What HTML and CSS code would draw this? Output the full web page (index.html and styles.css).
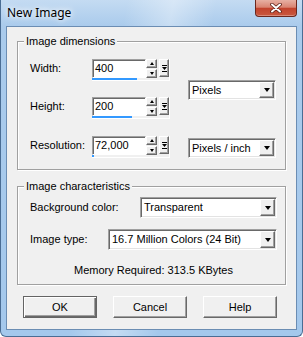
FILE: index.html
```html
<!DOCTYPE html>
<html lang="en">
<head>
    <meta charset="UTF-8">
    <title>New Image</title>
    <link rel="stylesheet" href="styles.css">
</head>
<body>
    <div class="window">
        <div class="titlebar">
            <span class="title">New Image</span>
            <div class="close">
                <svg width="12" height="10" viewBox="0 0 12 10">
                    <path d="M2 1.5 L10 8.5 M10 1.5 L2 8.5" stroke="#5a1f16" stroke-width="3.6" stroke-linecap="round"/>
                    <path d="M2 1.5 L10 8.5 M10 1.5 L2 8.5" stroke="#fff" stroke-width="2" stroke-linecap="round"/>
                </svg>
            </div>
        </div>

        <div class="client">
            <fieldset class="group dims">
                <legend>Image dimensions</legend>
                <div class="dim-grid">
                    <span class="lbl">Width:</span>
                    <div class="spin">
                        <div class="spin-row">
                            <div class="edit">400</div>
                            <div class="arrows"><span class="arr"><i class="up"></i></span><span class="arr"><i class="down"></i></span></div>
                            <div class="mini">
                                <svg width="5" height="7" viewBox="0 0 5 7"><rect x="0" y="0" width="5" height="1"/><polygon points="0,2 5,2 2.5,5"/><rect x="0" y="6" width="5" height="1"/></svg>
                            </div>
                        </div>
                        <div class="track"><div class="fill" style="width:45px"></div></div>
                    </div>
                    <div class="select unit-px">
                        <span class="val">Pixels</span>
                        <span class="btn"><i class="down"></i></span>
                    </div>

                    <span class="lbl">Height:</span>
                    <div class="spin">
                        <div class="spin-row">
                            <div class="edit">200</div>
                            <div class="arrows"><span class="arr"><i class="up"></i></span><span class="arr"><i class="down"></i></span></div>
                            <div class="mini">
                                <svg width="5" height="7" viewBox="0 0 5 7"><rect x="0" y="0" width="5" height="1"/><polygon points="0,2 5,2 2.5,5"/><rect x="0" y="6" width="5" height="1"/></svg>
                            </div>
                        </div>
                        <div class="track"><div class="fill" style="width:40px"></div></div>
                    </div>

                    <span class="lbl">Resolution:</span>
                    <div class="spin">
                        <div class="spin-row">
                            <div class="edit">72,000</div>
                            <div class="arrows"><span class="arr"><i class="up"></i></span><span class="arr"><i class="down"></i></span></div>
                            <div class="mini">
                                <svg width="5" height="7" viewBox="0 0 5 7"><rect x="0" y="0" width="5" height="1"/><polygon points="0,2 5,2 2.5,5"/><rect x="0" y="6" width="5" height="1"/></svg>
                            </div>
                        </div>
                        <div class="track"><div class="fill" style="width:2px"></div></div>
                    </div>
                    <div class="select unit-in">
                        <span class="val">Pixels / inch</span>
                        <span class="btn"><i class="down"></i></span>
                    </div>
                </div>
            </fieldset>

            <fieldset class="group chars">
                <legend>Image characteristics</legend>
                <div class="row">
                    <span class="lbl">Background color:</span>
                    <div class="select bg-select">
                        <span class="val">Transparent</span>
                        <span class="btn"><i class="down"></i></span>
                    </div>
                </div>
                <div class="row second">
                    <span class="lbl">Image type:</span>
                    <div class="select type-select">
                        <span class="val">16.7 Million Colors (24 Bit)</span>
                        <span class="btn"><i class="down"></i></span>
                    </div>
                </div>
                <p class="memory">Memory Required: 313.5 KBytes</p>
            </fieldset>

            <div class="buttons">
                <button class="default">OK</button>
                <button>Cancel</button>
                <button>Help</button>
            </div>
        </div>
    </div>
</body>
</html>
```

FILE: styles.css
```css
body {
    margin: 0;
    font-family: "Liberation Sans", Arial, sans-serif;
    font-size: 11px;
    color: #000;
}
.window {
    width: 303px;
    height: 337px;
    box-sizing: border-box;
    display: flex;
    flex-direction: column;
    border: 1px solid #4a6d94;
    border-top: none;
    border-radius: 0 0 6px 6px;
    background:
        linear-gradient(100deg, rgba(255,255,255,0) 35%, rgba(255,255,255,0.35) 48%, rgba(255,255,255,0) 60%),
        linear-gradient(to bottom, #c4dbf2 0, #aacbec 26px, #a4c8ec 100%);
}
.titlebar {
    height: 26px;
    display: flex;
    justify-content: space-between;
    align-items: flex-start;
}
.title {
    font-family: "Noto Sans", sans-serif;
    font-size: 12px;
    line-height: 16px;
    margin: 5px 0 0 6px;
    text-shadow: 0 0 5px #fff, 0 0 8px #fff;
}
.close {
    width: 42px;
    height: 17px;
    margin-right: 5px;
    box-sizing: border-box;
    border: 1px solid #6b271d;
    border-top: none;
    border-radius: 0 0 4px 4px;
    background: linear-gradient(to bottom, #e7b0a3 0%, #d98472 45%, #c2432d 52%, #c9583f 100%);
    box-shadow: inset 0 -1px 0 rgba(255,255,255,0.3);
    display: flex;
    align-items: center;
    justify-content: center;
}
.client {
    flex: 1;
    margin: 0 5px 6px;
    background: #f0f0f0;
    border: 1px solid #6b8db3;
    display: flex;
    flex-direction: column;
}
.group {
    margin: 0 10px;
    border: 1px solid #a0a0a0;
    box-shadow: 1px 1px 0 #fff, inset 1px 1px 0 #fff;
    min-width: 0;
}
.group legend {
    font-size: 11px;
    line-height: 13px;
    padding: 0 2px;
    margin-left: -6px;
    background: #f0f0f0;
}
.dims {
    margin-top: 8px;
    padding: 11px 8px 11px 12px;
}
.dim-grid {
    display: grid;
    grid-template-columns: 62px 96px 88px;
    grid-template-rows: 38px 39px 22px;
}
.lbl {
    line-height: 19px;
    white-space: nowrap;
}
.spin {
    width: 78px;
    height: 22px;
    box-sizing: border-box;
    border-right: 1px solid #fff;
    border-bottom: 1px solid #fff;
}
.spin-row {
    display: flex;
    height: 19px;
}
.edit {
    width: 54px;
    box-sizing: border-box;
    border: 1px solid;
    border-color: #a0a0a0 #fff #fff #a0a0a0;
    box-shadow: inset 1px 1px 0 #696969;
    background: #fff;
    padding: 0 0 0 2px;
    line-height: 17px;
}
.arrows {
    width: 11px;
    display: flex;
    flex-direction: column;
    gap: 1px;
}
.arr, .mini, .select .btn {
    box-sizing: border-box;
    background: #f0f0f0;
    border: 1px solid;
    border-color: #fff #696969 #696969 #fff;
    box-shadow: inset -1px -1px 0 #a0a0a0;
    display: flex;
    align-items: center;
    justify-content: center;
}
.arr {
    height: 9px;
}
.mini {
    width: 10px;
    height: 18px;
    margin-left: 2px;
}
.up, .down {
    display: block;
    width: 0;
    height: 0;
    border-left: 2.5px solid transparent;
    border-right: 2.5px solid transparent;
}
.up {
    border-bottom: 3px solid #000;
}
.down {
    border-top: 3px solid #000;
}
.select .down {
    border-left-width: 3.5px;
    border-right-width: 3.5px;
    border-top-width: 4px;
}
.track {
    width: 54px;
    height: 2px;
}
.fill {
    height: 2px;
    background: #3399ff;
}
.select {
    box-sizing: border-box;
    height: 20px;
    border: 1px solid;
    border-color: #a0a0a0 #fff #fff #a0a0a0;
    box-shadow: inset 1px 1px 0 #696969, inset -1px -1px 0 #e3e3e3;
    background: #fff;
    display: flex;
    align-items: stretch;
    padding: 1px 1px 1px 2px;
}
.select .val {
    flex: 1;
    line-height: 16px;
    padding-left: 1px;
    white-space: nowrap;
    overflow: hidden;
}
.select .btn {
    width: 15px;
}
.unit-px {
    grid-column: 3;
    grid-row: 1 / span 2;
    align-self: start;
    margin-top: 21px;
}
.unit-in {
    grid-column: 3;
    grid-row: 3;
    margin-top: 2px;
}
.chars {
    margin-top: 10px;
    padding: 4px 8px 7px 12px;
}
.row {
    display: flex;
    align-items: center;
}
.row .select {
    margin-left: auto;
    height: 21px;
}
.row.second {
    margin-top: 11px;
}
.bg-select {
    width: 137px;
}
.type-select {
    width: 169px;
}
.memory {
    margin: 14px 0 0;
    line-height: 13px;
    text-align: center;
}
.buttons {
    display: flex;
    gap: 16px;
    padding-left: 16px;
    margin-top: 11px;
}
button {
    width: 74px;
    height: 22px;
    box-sizing: border-box;
    font-family: "Liberation Sans", Arial, sans-serif;
    font-size: 11px;
    background: #f0f0f0;
    border: 1px solid;
    border-color: #fff #696969 #696969 #fff;
    box-shadow: inset -1px -1px 0 #a0a0a0;
    padding: 0;
}
button.default {
    border-color: #646464;
    box-shadow: inset 1px 1px 0 #fff, inset -1px -1px 0 #696969, inset -2px -2px 0 #a0a0a0;
}
```
